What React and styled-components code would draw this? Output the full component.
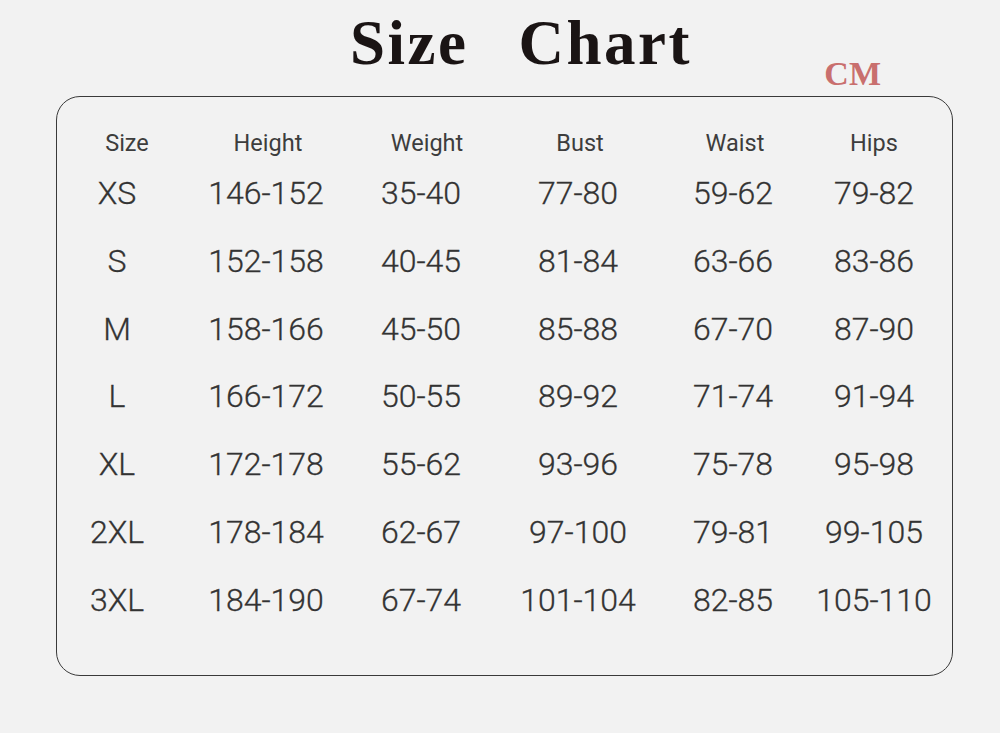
import React from "react";
import styled, { createGlobalStyle } from "styled-components";

const Global = createGlobalStyle`
  html, body {
    margin: 0;
    padding: 0;
    background: #f2f2f2;
  }
`;

const Page = styled.div`
  width: 1000px;
  height: 733px;
  background: #f2f2f2;
  overflow: hidden;
`;

const Header = styled.div`
  display: flex;
  align-items: flex-end;
  height: 90px;
  padding-left: 350px;
  box-sizing: border-box;
`;

const Title = styled.h1`
  margin: 0;
  display: flex;
  gap: 50px;
  font-family: "Liberation Serif", "DejaVu Serif", serif;
  font-weight: 700;
  font-size: 63px;
  line-height: 62px;
  letter-spacing: 2.5px;
  color: #1a1414;
  align-self: flex-start;
  padding-top: 12px;
`;

const Unit = styled.span`
  margin-left: auto;
  margin-right: 119px;
  font-family: "Liberation Serif", "DejaVu Serif", serif;
  font-weight: 700;
  font-size: 34px;
  line-height: 34px;
  color: #c96f6e;
  margin-bottom: -1px;
`;

const Box = styled.div`
  margin: 6px 0 0 56px;
  width: 897px;
  height: 580px;
  box-sizing: border-box;
  border: 1.5px solid #3a3a3a;
  border-radius: 24px;
  padding-top: 28px;
`;

const Grid = styled.div`
  display: grid;
  grid-template-columns: 120px 178px 132px 182px 128px 154px;
  font-family: Roboto, "Noto Sans", sans-serif;
  color: #333;
`;

const HeadCell = styled.div`
  font-size: 23.5px;
  color: #3d3d3d;
  height: 36px;
  line-height: 36px;
  text-align: center;
  padding-left: ${(p) => p.$shift || 0}px;
  margin-bottom: 15px;
`;

const Cell = styled.div`
  font-size: 32px;
  font-weight: 300;
  height: 67.8px;
  line-height: 34px;
  text-align: center;
  -webkit-text-stroke: 0.3px #333;
`;

const heads = [
  ["Size", 20],
  ["Height", 4],
  ["Weight", 12],
  ["Bust", 4],
  ["Waist", 4],
  ["Hips", 0],
];

const rows = [
  ["XS", "146-152", "35-40", "77-80", "59-62", "79-82"],
  ["S", "152-158", "40-45", "81-84", "63-66", "83-86"],
  ["M", "158-166", "45-50", "85-88", "67-70", "87-90"],
  ["L", "166-172", "50-55", "89-92", "71-74", "91-94"],
  ["XL", "172-178", "55-62", "93-96", "75-78", "95-98"],
  ["2XL", "178-184", "62-67", "97-100", "79-81", "99-105"],
  ["3XL", "184-190", "67-74", "101-104", "82-85", "105-110"],
];

export default function App() {
  return (
    <Page>
      <Global />
      <Header>
        <Title>
          <span>Size</span>
          <span>Chart</span>
        </Title>
        <Unit>CM</Unit>
      </Header>
      <Box>
        <Grid>
          {heads.map(([h, s]) => (
            <HeadCell key={h} $shift={s}>
              {h}
            </HeadCell>
          ))}
          {rows.map((r) =>
            r.map((v, i) => <Cell key={r[0] + i}>{v}</Cell>)
          )}
        </Grid>
      </Box>
    </Page>
  );
}
